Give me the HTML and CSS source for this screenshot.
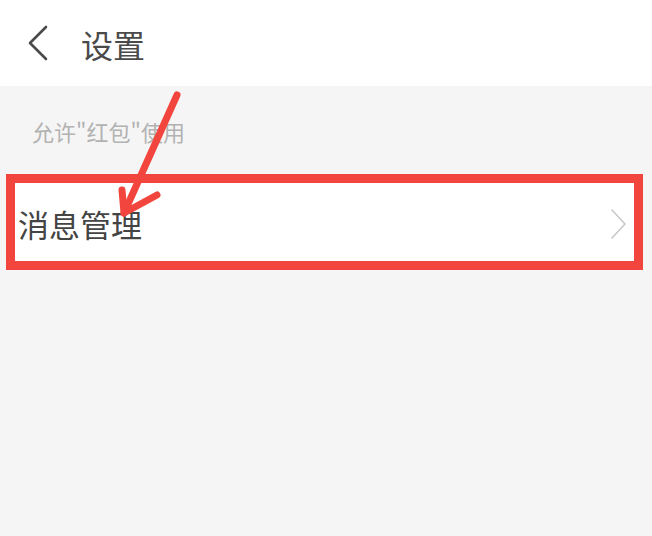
FILE: index.html
```html
<!DOCTYPE html>
<html lang="zh-CN">
<head>
  <meta charset="UTF-8" />
  <meta name="viewport" content="width=device-width, initial-scale=1.0" />
  <title>设置</title>
  <link rel="stylesheet" href="styles.css">
</head>
<body>

  <header class="topbar">
    <svg class="back" width="24" height="36" viewBox="0 0 24 36" aria-label="返回">
      <path d="M20 2 L4 18 L20 34" fill="none" stroke="#4a4a4a" stroke-width="2.6" stroke-linecap="round" stroke-linejoin="round"/>
    </svg>
    <h1>设置</h1>
  </header>

  <main class="contenido">
    <p class="hint">允许"红包"使用</p>

    <div class="fila marcada">
      <span>消息管理</span>
      <svg class="flecha" width="18" height="32" viewBox="0 0 18 32">
        <path d="M2 2 L15 16 L2 30" fill="none" stroke="#c8c8c8" stroke-width="1.6" stroke-linecap="round" stroke-linejoin="round"/>
      </svg>
    </div>
  </main>

  <!-- flecha roja de la captura -->
  <svg class="anotacion" width="652" height="536" viewBox="0 0 652 536">
    <g fill="none" stroke="#f2453d" stroke-width="7" stroke-linecap="round" stroke-linejoin="round">
      <path d="M177 95 L124 213"/>
      <path d="M122 190 L124 213 L157 195"/>
    </g>
  </svg>

</body>
</html>
```

FILE: styles.css
```css
body {
  margin: 0;
  font-family: "Noto Sans CJK SC", "Noto Sans", sans-serif;
  background: #f5f5f5;
  color: #444;
  position: relative;
  min-height: 536px;
}

.topbar {
  background-color: #ffffff;
  height: 86px;
  display: flex;
  align-items: center;
  padding-left: 26px;
}

.topbar h1 {
  margin: 2px 0 0 31px;
  font-size: 32px;
  font-weight: normal;
  color: #4a4a4a;
  line-height: 1;
}

.back {
  display: block;
}

.contenido {
  background: #f5f5f5;
}

.hint {
  margin: 0;
  padding: 30px 0 0 32px;
  font-size: 22px;
  line-height: 30px;
  color: #b2b2b2;
}

.fila {
  margin: 28px 9px 0 6px;
  background: #fff;
  display: flex;
  align-items: center;
  justify-content: space-between;
  padding: 3px 6px 0 3px;
  box-sizing: content-box;
}

.fila span {
  font-size: 31px;
  color: #444;
  line-height: 1;
}

.marcada {
  border: 9px solid #f2453d;
  height: 75px;
}

.flecha {
  display: block;
}

.anotacion {
  position: absolute;
  top: 0;
  left: 0;
  pointer-events: none;
}
```
